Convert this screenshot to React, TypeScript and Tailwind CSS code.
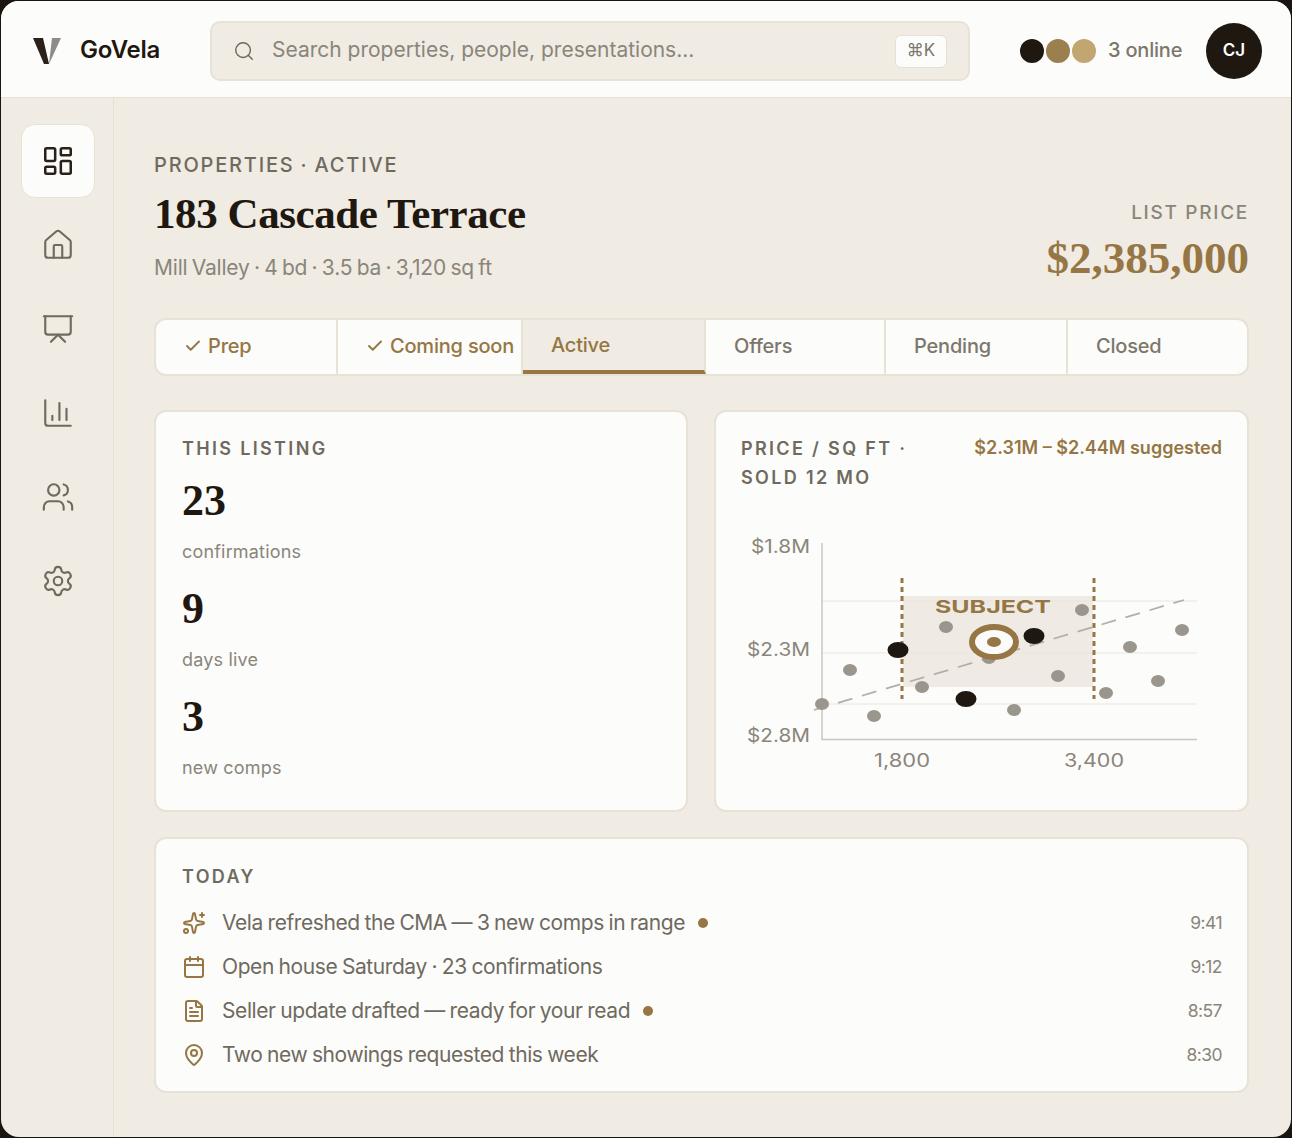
import { Search, LayoutDashboard, House, Presentation, ChartColumn, Users, Settings, Sparkles, Calendar, FileText, MapPin, Check } from "lucide-react";

const sans = "font-['Inter','Liberation_Sans',sans-serif]";
const serif = "font-['Liberation_Serif',serif]";

const navIcons = [House, Presentation, ChartColumn, Users, Settings];

const stages = [
  { label: "Prep", done: true, width: "w-[182px]" },
  { label: "Coming soon", done: true, width: "w-[185px]" },
  { label: "Active", active: true, width: "w-[183px]" },
  { label: "Offers", width: "w-[180px]" },
  { label: "Pending", width: "w-[182px]" },
  { label: "Closed", width: "flex-1" },
];

const stats = [
  { value: "23", label: "confirmations" },
  { value: "9", label: "days live" },
  { value: "3", label: "new comps" },
];

const activity = [
  { icon: Sparkles, text: "Vela refreshed the CMA — 3 new comps in range", time: "9:41", dot: true },
  { icon: Calendar, text: "Open house Saturday · 23 confirmations", time: "9:12" },
  { icon: FileText, text: "Seller update drafted — ready for your read", time: "8:57", dot: true },
  { icon: MapPin, text: "Two new showings requested this week", time: "8:30" },
];

const grayDots = [
  [822, 704], [850, 670], [874, 716], [922, 687], [946, 627], [989, 658], [1014, 710],
  [1058, 676], [1082, 610], [1106, 693], [1130, 647], [1158, 681], [1182, 630],
];
const blackDots = [[898, 650], [966, 699], [1034, 636]];

function Chart() {
  const label = "fill-[#8a857a] text-[18px]";
  return (
    <svg viewBox="741 530 481 250" className="mt-[38px] h-[250px] w-[481px]">
      <rect x="903" y="596" width="190" height="91" fill="#efebe4" />
      {[601, 653, 704].map((y) => (
        <line key={y} x1="822" x2="1197" y1={y} y2={y} stroke="#e9e5dd" strokeWidth="1.2" />
      ))}
      <path d="M822 543V739.5H1197" fill="none" stroke="#c9c6bf" strokeWidth="1.5" />
      <line x1="814" y1="710" x2="1184" y2="600" stroke="#b3afa6" strokeWidth="1.8" strokeDasharray="15 10" />
      {grayDots.map(([cx, cy]) => (
        <ellipse key={cx} cx={cx} cy={cy} rx="7" ry="6" fill="#9a968d" />
      ))}
      <line x1="902" x2="902" y1="578" y2="699" stroke="#957644" strokeWidth="3" strokeDasharray="5 4" />
      <line x1="1094" x2="1094" y1="578" y2="699" stroke="#957644" strokeWidth="3" strokeDasharray="5 4" />
      {blackDots.map(([cx, cy]) => (
        <ellipse key={cx} cx={cx} cy={cy} rx="10.5" ry="8" fill="#1f1811" />
      ))}
      <ellipse cx="994" cy="642" rx="22" ry="15" fill="#fbfbfa" stroke="#957644" strokeWidth="6" />
      <ellipse cx="994" cy="642" rx="7" ry="5" fill="#957644" />
      <text x="935" y="613" textLength="116" lengthAdjust="spacingAndGlyphs" className="fill-[#957644] text-[18px] font-bold">SUBJECT</text>
      <text x="751" y="553" textLength="59" lengthAdjust="spacingAndGlyphs" className={label}>$1.8M</text>
      <text x="747" y="656" textLength="63" lengthAdjust="spacingAndGlyphs" className={label}>$2.3M</text>
      <text x="747" y="742" textLength="63" lengthAdjust="spacingAndGlyphs" className={label}>$2.8M</text>
      <text x="874" y="767" textLength="56" lengthAdjust="spacingAndGlyphs" className={label}>1,800</text>
      <text x="1064" y="767" textLength="60" lengthAdjust="spacingAndGlyphs" className={label}>3,400</text>
    </svg>
  );
}

export default function App() {
  return (
    <div className={`w-[1292px] h-[1138px] bg-[#1a1510] p-px ${sans}`}>
      <div className="flex h-full flex-col overflow-hidden rounded-[18px] bg-[#f0ebe3]">
        <header className="flex h-[97px] shrink-0 items-center border-b border-[#e6dfd2] bg-[#fcfcfb] pl-8 pr-[29px] pt-1">
          <svg viewBox="0 0 28 27" className="h-[27px] w-[28px]">
            <path d="M0 0H10L16 26H11Z" fill="#2a211a" />
            <path d="M19 0H28L16 26Z" fill="#8f8c87" />
          </svg>
          <span className="mb-[2px] ml-[19px] w-[130px] text-[24px] font-semibold tracking-[-0.01em] text-[#1f1811]">GoVela</span>
          <div className="flex h-[60px] w-[760px] items-center rounded-[10px] border-2 border-[#e8e2d6] bg-[#f0ebe3] pl-[21px] pr-[21px]">
            <Search className="h-[22px] w-[22px] text-[#6f6a5f]" strokeWidth={1.6} />
            <span className="mb-[2px] ml-[17px] flex-1 text-[21px] text-[#8a857a]">Search properties, people, presentations...</span>
            <span className="flex h-[33px] w-[52px] items-center justify-center rounded-[6px] border border-[#e6dfd2] bg-[#fcfcfb] text-[17px] text-[#7d776b]">⌘K</span>
          </div>
          <div className="ml-[50px] flex gap-[2px]">
            <span className="h-[24px] w-[24px] rounded-full bg-[#1f1811]" />
            <span className="h-[24px] w-[24px] rounded-full bg-[#9c7f4f]" />
            <span className="h-[24px] w-[24px] rounded-full bg-[#c2a671]" />
          </div>
          <span className="mb-[2px] ml-3 text-[20px] font-medium tracking-[-0.01em] text-[#7d776b]">3 online</span>
          <span className="ml-auto flex h-[56px] w-[56px] items-center justify-center rounded-full bg-[#1f1811] text-[17px] font-semibold text-white">CJ</span>
        </header>

        <div className="flex min-h-0 flex-1">
          <aside className="flex w-[113px] shrink-0 flex-col items-center gap-[10px] border-r border-[#e6dfd2] pl-[2px] pt-[26px]">
            <div className="flex h-[74px] w-[74px] items-center justify-center rounded-[14px] border border-[#e8e2d6] bg-[#fcfcfb]">
              <LayoutDashboard className="h-[34px] w-[34px] text-[#2a211a]" strokeWidth={1.8} />
            </div>
            {navIcons.map((Icon, i) => (
              <div key={i} className="flex h-[74px] w-[74px] items-center justify-center">
                <Icon className="h-[34px] w-[34px] text-[#6f6a5f]" strokeWidth={1.5} />
              </div>
            ))}
          </aside>

          <main className="min-w-0 flex-1 pl-[40px] pr-[42px] pt-[53px]">
            <div className="flex items-end justify-between">
              <div>
                <p className="text-[20px] font-medium leading-[28px] tracking-[0.09em] [word-spacing:-1px] text-[#6f6a5f]">PROPERTIES · ACTIVE</p>
                <h1 className={`${serif} mt-[10px] text-[43px] font-bold leading-[50px] tracking-[-0.01em] text-[#1f1811]`}>183 Cascade Terrace</h1>
                <p className="mt-[14px] text-[21px] leading-[30px] tracking-[-0.01em] [word-spacing:-1.3px] text-[#8a857a]">Mill Valley · 4 bd · 3.5 ba · 3,120 sq ft</p>
              </div>
              <div className="text-right">
                <p className="text-[19px] font-medium leading-[26px] tracking-[0.09em] text-[#8a857a]">LIST PRICE</p>
                <p className={`${serif} mt-[7px] text-[45px] font-bold leading-[50px] text-[#957644]`}>$2,385,000</p>
              </div>
            </div>

            <div className="mt-[35px] flex h-[58px] overflow-hidden rounded-[12px] border-2 border-[#e8e2d6] bg-[#fcfcfb]">
              {stages.map((s) => (
                <div
                  key={s.label}
                  className={`${s.width} flex items-center gap-[6px] border-r-2 border-[#e8e2d6] pb-[2px] pl-7 text-[20px] font-medium tracking-[-0.01em] last:border-r-0 ${
                    s.active ? "border-b-[4px] border-b-[#957644] bg-[#f0ebe3] pb-0 pt-[1px] text-[#957644]" : s.done ? "text-[#957644]" : "text-[#7d776b]"
                  }`}
                >
                  {s.done && <Check className="h-[18px] w-[18px]" strokeWidth={2.5} />}
                  {s.label}
                </div>
              ))}
            </div>

            <div className="mt-[34px] flex gap-[26px]">
              <section className="h-[402px] w-[535px] rounded-[12px] border-2 border-[#e8e2d6] bg-[#fcfcfb] px-[26px] pt-[23px]">
                <h2 className="text-[18px] font-semibold leading-[28px] tracking-[0.13em] text-[#6f6a5f]">THIS LISTING</h2>
                {stats.map((s, i) => (
                  <div key={s.label} className={i === 0 ? "mt-[12px]" : "mt-[17px]"}>
                    <p className={`${serif} text-[44px] font-bold leading-[52px] text-[#1f1811]`}>{s.value}</p>
                    <p className="mt-[11px] text-[18px] leading-[28px] tracking-[0.01em] text-[#8a857a]">{s.label}</p>
                  </div>
                ))}
              </section>

              <section className="h-[402px] flex-1 rounded-[12px] border-2 border-[#e8e2d6] bg-[#fcfcfb] px-[25px] pt-[22px]">
                <div className="flex items-start justify-between">
                  <h2 className="w-[190px] text-[18px] font-semibold leading-[29px] tracking-[0.13em] text-[#6f6a5f]">PRICE / SQ FT · SOLD 12 MO</h2>
                  <span className="text-[18px] font-semibold leading-[28px] text-[#957644]">$2.31M – $2.44M suggested</span>
                </div>
                <Chart />
              </section>
            </div>

            <section className="mt-[25px] h-[256px] rounded-[12px] border-2 border-[#e8e2d6] bg-[#fcfcfb] pl-[26px] pr-[25px] pt-[24px]">
              <h2 className="text-[18px] font-semibold leading-[28px] tracking-[0.13em] text-[#6f6a5f]">TODAY</h2>
              <ul className="mt-[10px]">
                {activity.map((a) => (
                  <li key={a.time} className="flex h-[44px] items-center">
                    <a.icon className="h-[24px] w-[24px] text-[#957644]" strokeWidth={2} />
                    <span className="ml-[16px] text-[21px] tracking-[-0.02em] [word-spacing:-0.8px] text-[#6f6a5f]">{a.text}</span>
                    {a.dot && <span className="ml-[13px] h-[10px] w-[10px] rounded-full bg-[#957644]" />}
                    <span className="ml-auto text-[17.5px] tracking-[-0.03em] text-[#8a857a]">{a.time}</span>
                  </li>
                ))}
              </ul>
            </section>
          </main>
        </div>
      </div>
    </div>
  );
}
